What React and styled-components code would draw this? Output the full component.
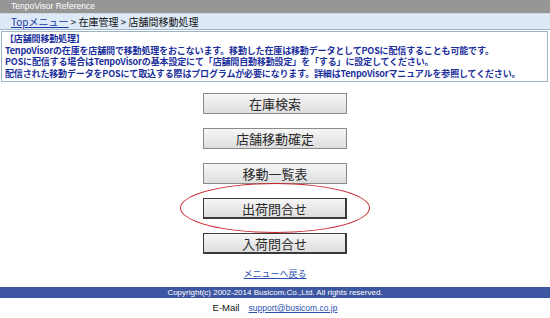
import React from 'react';
import styled, { createGlobalStyle } from 'styled-components';

const Global = createGlobalStyle`
  body {
    margin: 0;
    background: #fff;
    font-family: "Noto Sans CJK JP", "DejaVu Sans", sans-serif;
  }
`;

const Page = styled.div`
  width: 550px;
  height: 318px;
  display: flex;
  flex-direction: column;
  overflow: hidden;
`;

const TitleBar = styled.div`
  height: 13px;
  background: #969696;
  color: #fff;
  font-family: "Liberation Sans", sans-serif;
  font-size: 8.5px;
  line-height: 13px;
  padding-left: 11px;
  border-bottom: 1px solid #cfd9e4;
`;

const Crumbs = styled.div`
  height: 15px;
  background: #dde9f6;
  border-bottom: 1px solid #9fb5c6;
  font-size: 10px;
  line-height: 15px;
  padding-left: 11px;
  color: #111;
  a {
    color: #1a3aa8;
    text-decoration: underline;
  }
`;

const InfoBox = styled.div`
  margin: 1px 2px 0 1px;
  padding: 1px 3px 2px 3px;
  border: 1px solid #9fb2c2;
  color: #1b2f9c;
  font-size: 9px;
  line-height: 11.5px;
  font-weight: bold;
  letter-spacing: -0.15px;
  white-space: nowrap;
  overflow: hidden;
`;

const Menu = styled.div`
  display: flex;
  flex-direction: column;
  align-items: center;
  gap: 14px;
  margin-top: 11px;
`;

const Circle = styled.div`
  position: relative;
  &::after {
    content: '';
    position: absolute;
    left: -23px;
    right: -23px;
    top: -15px;
    bottom: -14px;
    border: 1.5px solid #c8242c;
    border-radius: 50%;
    pointer-events: none;
  }
`;

const MenuButton = styled.button`
  width: 144px;
  height: 21px;
  padding: 0;
  border: 1px solid ${(p) => (p.dark ? '#3a3a3a' : '#8a8a8a')};
  border-width: ${(p) => (p.dark ? '1px 2px 2px 1px' : '1px')};
  background: linear-gradient(#f6f6f6, #dedede);
  font-family: "Noto Sans CJK JP", sans-serif;
  font-size: 13px;
  font-weight: 400;
  line-height: 19px;
  color: #2a2a2a;
  display: block;
`;

const BackLink = styled.a`
  margin-top: 14px;
  align-self: center;
  font-size: 9px;
  line-height: 12px;
  color: #2a4fb0;
  text-decoration: underline;
`;

const Copyright = styled.div`
  margin-top: 7px;
  height: 11px;
  background: #3e57a2;
  color: #fff;
  font-family: "Liberation Sans", sans-serif;
  font-size: 8px;
  line-height: 11px;
  text-align: center;
`;

const Mail = styled.div`
  margin-top: 4px;
  display: flex;
  justify-content: center;
  align-items: baseline;
  gap: 9px;
  font-family: "Liberation Sans", sans-serif;
  font-size: 9.5px;
  line-height: 12px;
  color: #111;
  a {
    font-size: 8.5px;
    color: #2a4fb0;
    text-decoration: underline;
  }
`;

const items = [
  { label: '在庫検索' },
  { label: '店舗移動確定' },
  { label: '移動一覧表' },
  { label: '出荷問合せ', dark: true, circled: true },
  { label: '入荷問合せ', dark: true },
];

export default function App() {
  return (
    <Page>
      <Global />
      <TitleBar>TenpoVisor Reference</TitleBar>
      <Crumbs>
        <a>Topメニュー</a> &gt; 在庫管理 &gt; 店舗間移動処理
      </Crumbs>
      <InfoBox>
        <div>【店舗間移動処理】</div>
        <div>TenpoVisorの在庫を店舗間で移動処理をおこないます。移動した在庫は移動データとしてPOSに配信することも可能です。</div>
        <div>POSに配信する場合はTenpoVisorの基本設定にて「店舗間自動移動設定」を「する」に設定してください。</div>
        <div>配信された移動データをPOSにて取込する際はプログラムが必要になります。詳細はTenpoVisorマニュアルを参照してください。</div>
      </InfoBox>
      <Menu>
        {items.map((it) => {
          const btn = <MenuButton key={it.label} dark={it.dark}>{it.label}</MenuButton>;
          return it.circled ? <Circle key={it.label}>{btn}</Circle> : btn;
        })}
      </Menu>
      <BackLink>メニューへ戻る</BackLink>
      <Copyright>Copyright(c) 2002-2014 Busicom.Co.,Ltd. All rights reserved.</Copyright>
      <Mail>
        <span>E-Mail</span>
        <a>support@busicom.co.jp</a>
      </Mail>
    </Page>
  );
}
